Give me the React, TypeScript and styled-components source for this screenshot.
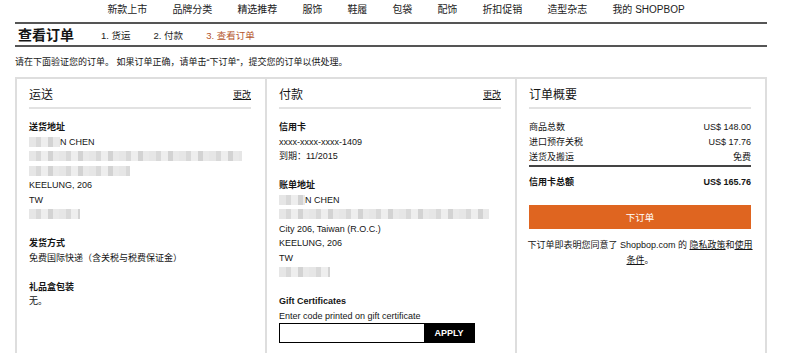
import React from "react";
import styled, { createGlobalStyle } from "styled-components";

const GlobalStyle = createGlobalStyle`
  body {
    margin: 0;
    background: #fff;
    color: #151515;
    font-family: "Liberation Sans", "Noto Sans CJK SC", sans-serif;
  }
`;

const navItems = [
  "新款上市",
  "品牌分类",
  "精选推荐",
  "服饰",
  "鞋履",
  "包袋",
  "配饰",
  "折扣促销",
  "造型杂志",
  "我的 SHOPBOP",
];

//#region components

const Page = styled.div`
  width: 752px;
  padding-left: 15px;
`;

const Nav = styled.nav`
  height: 22px;
  display: flex;
  justify-content: center;
  align-items: center;
  gap: 25px;
  font-size: 10px;
  color: #222;
  padding-left: 10px;
  padding-bottom: 6px;
  box-sizing: border-box;
`;

const TitleBar = styled.div`
  height: 21px;
  border-top: 2px solid #555;
  border-bottom: 2px solid #555;
  display: flex;
  align-items: center;
  padding-left: 3px;
`;

const Title = styled.h1`
  margin: 0 27px 0 0;
  font-size: 14px;
  font-weight: bold;
  line-height: 16px;
`;

const Step = styled.span<{ $active?: boolean }>`
  font-size: 9.5px;
  margin-right: 23px;
  color: ${(p) => (p.$active ? "#b4542a" : "#222")};
`;

const Intro = styled.p`
  margin: 8px 0 8px;
  font-size: 9px;
  line-height: 14px;
`;

const Panels = styled.div`
  display: grid;
  grid-template-columns: repeat(3, 250px);
  border-top: 2px solid #dedede;
  border-left: 2px solid #dedede;
  height: 276px;
`;

const Column = styled.section`
  border-right: 2px solid #dedede;
  padding: 8px 12px 0 12px;
  font-size: 9px;
  line-height: 14.5px;
`;

const Heading = styled.div`
  display: flex;
  justify-content: space-between;
  align-items: center;
  padding-bottom: 4px;
  border-bottom: 2px solid #e2e2e2;
  margin-bottom: 11px;
  margin-right: 2px;
`;

const HeadingText = styled.h2`
  margin: 0;
  font-size: 12px;
  line-height: 16px;
  font-weight: normal;
`;

const Link = styled.a`
  color: #151515;
  text-decoration: underline;
  font-size: 9px;
`;

const Block = styled.div`
  & + & {
    margin-top: 14.5px;
  }
`;

const Label = styled.div`
  font-weight: bold;
`;

const Line = styled.div`
  display: flex;
  align-items: center;
  height: 14.5px;
`;

const Blur = styled.span<{ $w: number }>`
  display: inline-block;
  width: ${(p) => p.$w}px;
  height: 10px;
  background: repeating-linear-gradient(
    90deg,
    #e6e6e6 0 7px,
    #d9d9d9 7px 12px,
    #eeeeee 12px 19px,
    #d3d3d3 19px 24px,
    #e9e9e9 24px 30px
  );
`;

const SummaryList = styled.div`
  border-bottom: 2px solid #444;
  margin-right: 2px;
`;

const SummaryRow = styled.div<{ $bold?: boolean }>`
  display: flex;
  justify-content: space-between;
  height: 15px;
  line-height: 15px;
  font-weight: ${(p) => (p.$bold ? "bold" : "normal")};
`;

const TotalRow = styled(SummaryRow)`
  margin: 8px 2px 0 0;
`;

const OrderButton = styled.button`
  display: block;
  width: calc(100% - 2px);
  height: 24px;
  margin-top: 15px;
  border: none;
  background: #df6520;
  color: #fff;
  font-family: inherit;
  font-size: 9.5px;
  cursor: pointer;
`;

const Agreement = styled.p`
  margin: 9px 0 0 -2px;
  text-align: center;
  font-size: 9px;
  line-height: 14.5px;
  white-space: nowrap;
`;

const GiftForm = styled.div`
  display: flex;
  width: 196px;
  height: 20px;
  border: 1px solid #000;
  box-sizing: border-box;
`;

const GiftInput = styled.input`
  flex: 1;
  min-width: 0;
  border: none;
  outline: none;
  padding: 0 4px;
`;

const ApplyButton = styled.button`
  width: 50px;
  border: none;
  background: #000;
  color: #fff;
  font-family: inherit;
  font-size: 9px;
  font-weight: bold;
`;

//#endregion

export default function App() {
  return (
    <>
      <GlobalStyle />
      <Page>
        <Nav>
          {navItems.map((item) => (
            <span key={item}>{item}</span>
          ))}
        </Nav>
        <TitleBar>
          <Title>查看订单</Title>
          <Step>1. 货运</Step>
          <Step>2. 付款</Step>
          <Step $active>3. 查看订单</Step>
        </TitleBar>
        <Intro>请在下面验证您的订单。 如果订单正确，请单击“下订单”，提交您的订单以供处理。</Intro>
        <Panels>
          <Column>
            <Heading>
              <HeadingText>运送</HeadingText>
              <Link>更改</Link>
            </Heading>
            <Block>
              <Label>送货地址</Label>
              <Line>
                <Blur $w={31} />N CHEN
              </Line>
              <Line>
                <Blur $w={213} />
              </Line>
              <Line>
                <Blur $w={101} />
              </Line>
              <Line>KEELUNG, 206</Line>
              <Line>TW</Line>
              <Line>
                <Blur $w={51} />
              </Line>
            </Block>
            <Block>
              <Label>发货方式</Label>
              <div>免费国际快递（含关税与税费保证金）</div>
            </Block>
            <Block>
              <Label>礼品盒包装</Label>
              <div>无。</div>
            </Block>
          </Column>
          <Column>
            <Heading>
              <HeadingText>付款</HeadingText>
              <Link>更改</Link>
            </Heading>
            <Block>
              <Label>信用卡</Label>
              <div>xxxx-xxxx-xxxx-1409</div>
              <div>到期：11/2015</div>
            </Block>
            <Block>
              <Label>账单地址</Label>
              <Line>
                <Blur $w={26} />N CHEN
              </Line>
              <Line>
                <Blur $w={210} />
              </Line>
              <Line>City 206, Taiwan (R.O.C.)</Line>
              <Line>KEELUNG, 206</Line>
              <Line>TW</Line>
              <Line>
                <Blur $w={51} />
              </Line>
            </Block>
            <Block>
              <Label>Gift Certificates</Label>
              <div>Enter code printed on gift certificate</div>
              <GiftForm>
                <GiftInput />
                <ApplyButton>APPLY</ApplyButton>
              </GiftForm>
            </Block>
          </Column>
          <Column>
            <Heading>
              <HeadingText>订单概要</HeadingText>
            </Heading>
            <SummaryList>
              <SummaryRow>
                <span>商品总数</span>
                <span>US$ 148.00</span>
              </SummaryRow>
              <SummaryRow>
                <span>进口预存关税</span>
                <span>US$ 17.76</span>
              </SummaryRow>
              <SummaryRow>
                <span>送货及搬运</span>
                <span>免费</span>
              </SummaryRow>
            </SummaryList>
            <TotalRow $bold>
              <span>信用卡总额</span>
              <span>US$ 165.76</span>
            </TotalRow>
            <OrderButton>下订单</OrderButton>
            <Agreement>
              下订单即表明您同意了 Shopbop.com 的 <Link>隐私政策</Link>和<Link>使用</Link>
              <br />
              <Link>条件</Link>。
            </Agreement>
          </Column>
        </Panels>
      </Page>
    </>
  );
}
